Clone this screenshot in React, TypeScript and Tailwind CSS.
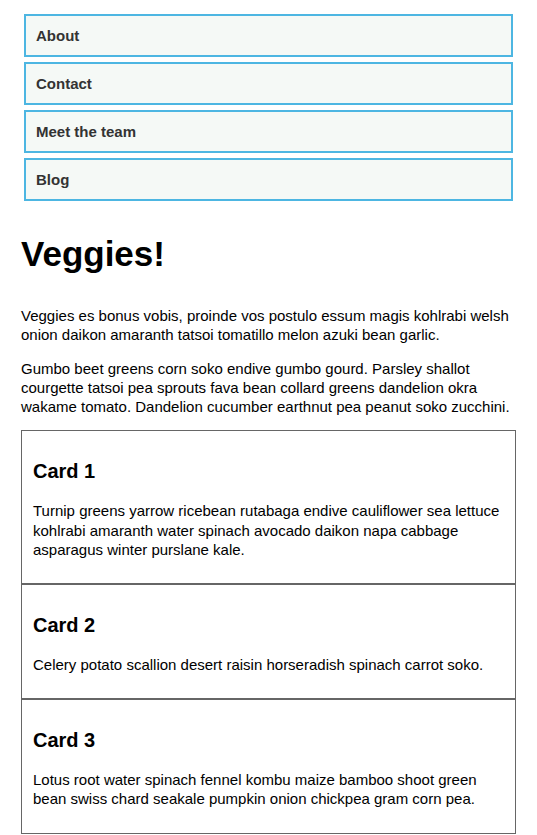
const navLinks = ['About', 'Contact', 'Meet the team', 'Blog']

const cards = [
  {
    title: 'Card 1',
    body: 'Turnip greens yarrow ricebean rutabaga endive cauliflower sea lettuce kohlrabi amaranth water spinach avocado daikon napa cabbage asparagus winter purslane kale.',
  },
  {
    title: 'Card 2',
    body: 'Celery potato scallion desert raisin horseradish spinach carrot soko.',
  },
  {
    title: 'Card 3',
    body: 'Lotus root water spinach fennel kombu maize bamboo shoot green bean swiss chard seakale pumpkin onion chickpea gram corn pea.',
  },
]

export default function App() {
  return (
    <div className="min-h-screen bg-white px-[21px] pt-[14px] text-[15px] leading-[19.2px] text-black" style={{ fontFamily: '"Liberation Sans", Arial, sans-serif' }}>
      <nav>
        <ul className="mx-[3px] flex flex-col gap-[5px]">
          {navLinks.map(link => (
            <li key={link}>
              <a href="#" className="flex h-[43px] items-center border-2 border-[#4db6e2] bg-[#f5f9f6] pt-[1px] pl-[10px] font-bold text-[#333]">
                {link}
              </a>
            </li>
          ))}
        </ul>
      </nav>

      <h1 className="mt-[33px] text-[35px] leading-[40px] font-bold">Veggies!</h1>

      <p className="mt-[32px]">
        Veggies es bonus vobis, proinde vos postulo essum magis kohlrabi welsh onion daikon amaranth tatsoi tomatillo melon azuki bean garlic.
      </p>
      <p className="mt-[14.4px]">
        Gumbo beet greens corn soko endive gumbo gourd. Parsley shallot courgette tatsoi pea sprouts fava bean collard greens dandelion okra wakame tomato. Dandelion cucumber earthnut pea peanut soko zucchini.
      </p>

      <div className="mt-[14px] flex flex-col">
        {cards.map(card => (
          <div key={card.title} className="border border-[#666] px-[11px] pt-[29px] pb-[24px]">
            <h2 className="text-[20px] leading-[23px] font-bold">{card.title}</h2>
            <p className="mt-[18px]">{card.body}</p>
          </div>
        ))}
      </div>
    </div>
  )
}
